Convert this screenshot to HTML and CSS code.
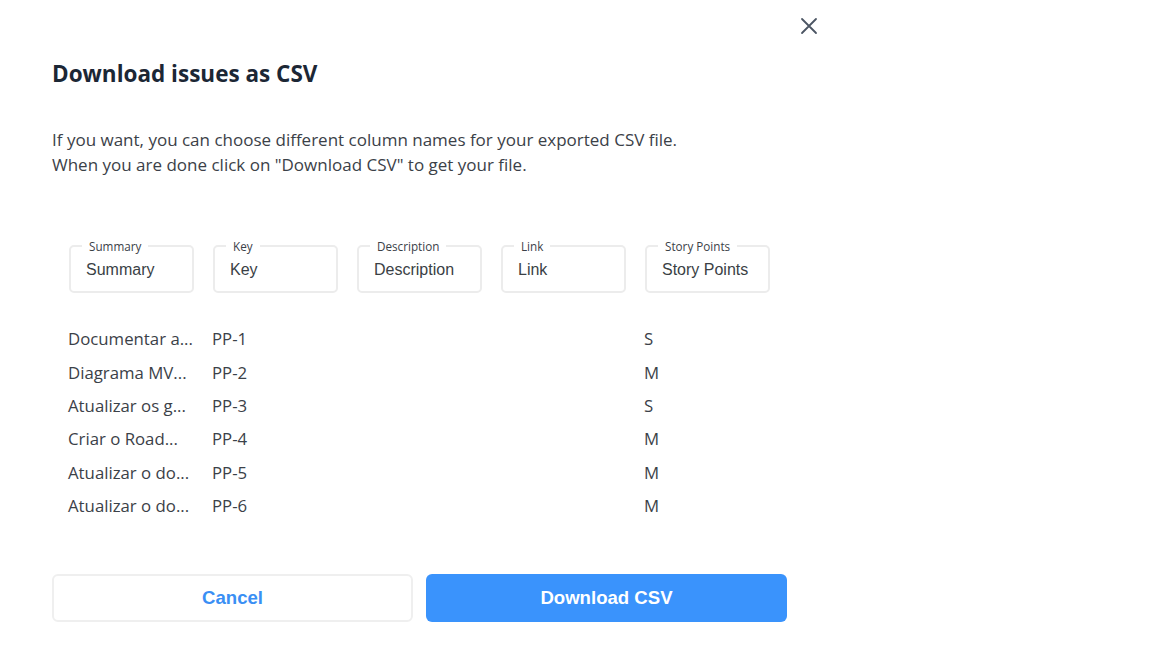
FILE: index.html
```html
<!DOCTYPE html>
<html>
<head>
<meta charset="utf-8">
<link rel="stylesheet" href="styles.css">
</head>
<body>
<div class="dialog">
  <button class="close" aria-label="Close">
    <svg width="18" height="18" viewBox="0 0 18 18"><path d="M2 2L16 16M16 2L2 16" stroke="#4b5563" stroke-width="1.8" stroke-linecap="round"/></svg>
  </button>
  <h1 class="title">Download issues as CSV</h1>
  <p class="intro">If you want, you can choose different column names for your exported CSV file.<br>When you are done click on "Download CSV" to get your file.</p>
  <div class="fields">
    <div class="field"><span class="label">Summary</span><span class="value">Summary</span></div>
    <div class="field"><span class="label">Key</span><span class="value">Key</span></div>
    <div class="field"><span class="label">Description</span><span class="value">Description</span></div>
    <div class="field"><span class="label">Link</span><span class="value">Link</span></div>
    <div class="field"><span class="label">Story Points</span><span class="value">Story Points</span></div>
  </div>
  <div class="rows">
    <div class="row"><span>Documentar a...</span><span>PP-1</span><span></span><span></span><span>S</span></div>
    <div class="row"><span>Diagrama MV...</span><span>PP-2</span><span></span><span></span><span>M</span></div>
    <div class="row"><span>Atualizar os g...</span><span>PP-3</span><span></span><span></span><span>S</span></div>
    <div class="row"><span>Criar o Road...</span><span>PP-4</span><span></span><span></span><span>M</span></div>
    <div class="row"><span>Atualizar o do...</span><span>PP-5</span><span></span><span></span><span>M</span></div>
    <div class="row"><span>Atualizar o do...</span><span>PP-6</span><span></span><span></span><span>M</span></div>
  </div>
  <div class="actions">
    <button class="btn cancel">Cancel</button>
    <button class="btn primary">Download CSV</button>
  </div>
</div>
</body>
</html>
```
FILE: styles.css
```css
html, body {
  margin: 0;
  padding: 0;
  background: #ffffff;
}
body {
  font-family: "Open Sans", "Noto Sans", sans-serif;
  color: #33383f;
}
.dialog {
  position: relative;
  width: 735px;
  padding: 58px 0 0 52px;
}
.close {
  position: absolute;
  left: 800px;
  top: 17px;
  width: 18px;
  height: 18px;
  padding: 0;
  border: none;
  background: none;
  cursor: pointer;
}
.close svg { display: block; }
.title {
  margin: 0;
  font-size: 22.5px;
  line-height: 32px;
  font-weight: 700;
  color: #1c2735;
}
.intro {
  margin: 37px 0 0;
  font-size: 17px;
  line-height: 25px;
  color: #3b4148;
}
.fields {
  display: flex;
  gap: 19px;
  margin: 62px 0 0 17px;
}
.field {
  position: relative;
  box-sizing: border-box;
  width: 125px;
  height: 48px;
  border: 2px solid #ececec;
  border-radius: 5px;
  display: flex;
  align-items: center;
  padding: 2px 0 0 15px;
  margin-top: 6px;
}
.label {
  position: absolute;
  top: -8px;
  left: 11px;
  padding: 0 7px;
  background: #fff;
  font-size: 11.7px;
  line-height: 14px;
  color: #3b4148;
}
.value {
  font-family: "Liberation Sans", Arial, sans-serif;
  font-size: 16px;
  color: #3a3f45;
}
.rows {
  margin: 29px 0 0 16px;
}
.row {
  display: grid;
  grid-template-columns: repeat(5, 144px);
  height: 33.4px;
  align-items: center;
  font-size: 16.8px;
  color: #3b4148;
}
.actions {
  display: flex;
  gap: 13px;
  margin-top: 52px;
}
.btn {
  box-sizing: border-box;
  flex: none;
  width: 361px;
  height: 48px;
  border-radius: 6px;
  font-family: "Liberation Sans", Arial, sans-serif;
  font-size: 18.6px;
  font-weight: 700;
  cursor: pointer;
}
.cancel {
  background: #fff;
  border: 2px solid #efefef;
  color: #3a8ff4;
}
.primary {
  background: #3a93fc;
  border: none;
  color: #fff;
}
```
